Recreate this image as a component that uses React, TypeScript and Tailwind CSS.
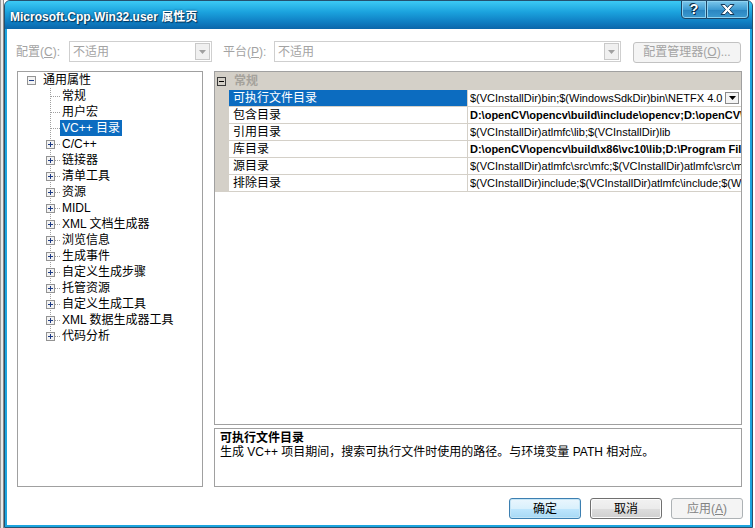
import React from 'react';

const font = "font-['Liberation_Sans','Noto_Sans_CJK_SC',sans-serif]";

const treeItems = [
  { label: '常规', expandable: false },
  { label: '用户宏', expandable: false },
  { label: 'VC++ 目录', expandable: false, selected: true },
  { label: 'C/C++', expandable: true },
  { label: '链接器', expandable: true },
  { label: '清单工具', expandable: true },
  { label: '资源', expandable: true },
  { label: 'MIDL', expandable: true },
  { label: 'XML 文档生成器', expandable: true },
  { label: '浏览信息', expandable: true },
  { label: '生成事件', expandable: true },
  { label: '自定义生成步骤', expandable: true },
  { label: '托管资源', expandable: true },
  { label: '自定义生成工具', expandable: true },
  { label: 'XML 数据生成器工具', expandable: true },
  { label: '代码分析', expandable: true },
];

const properties = [
  {
    name: '可执行文件目录',
    value: '$(VCInstallDir)bin;$(WindowsSdkDir)bin\\NETFX 4.0 Tools;$(WindowsSdkDir)bin;$(VSInstallDir)Common7\\Tools\\bin',
    bold: false,
    selected: true,
  },
  { name: '包含目录', value: 'D:\\openCV\\opencv\\build\\include\\opencv;D:\\openCV\\opencv\\build\\include;$(IncludePath)', bold: true },
  { name: '引用目录', value: '$(VCInstallDir)atlmfc\\lib;$(VCInstallDir)lib', bold: false },
  { name: '库目录', value: 'D:\\openCV\\opencv\\build\\x86\\vc10\\lib;D:\\Program Files\\Microsoft SDKs\\Windows\\v7.0A\\Lib', bold: true },
  { name: '源目录', value: '$(VCInstallDir)atlmfc\\src\\mfc;$(VCInstallDir)atlmfc\\src\\mfcm;$(VCInstallDir)atlmfc\\src\\atl', bold: false },
  { name: '排除目录', value: '$(VCInstallDir)include;$(VCInstallDir)atlmfc\\include;$(WindowsSdkDir)include;$(FrameworkSDKDir)include', bold: false },
];

function ExpandBox({ open }: { open?: boolean }) {
  return (
    <svg width="9" height="9" className="shrink-0" shapeRendering="crispEdges">
      <rect x="0.5" y="0.5" width="8" height="8" fill="#f3f3f3" stroke="#939393" />
      <line x1="2" y1="4.5" x2="7" y2="4.5" stroke="#1d3b85" />
      {!open && <line x1="4.5" y1="2" x2="4.5" y2="7" stroke="#1d3b85" />}
    </svg>
  );
}

function Connector({ expandable, last }: { expandable: boolean; last: boolean }) {
  return (
    <svg width="14" height="16" className="shrink-0" shapeRendering="crispEdges">
      <line x1="4.5" y1="0" x2="4.5" y2={last ? 8 : 16} stroke="#a0a0a0" strokeDasharray="1 1" />
      <line x1="5" y1="8.5" x2="14" y2="8.5" stroke="#a0a0a0" strokeDasharray="1 1" />
      {expandable && (
        <g>
          <rect x="0.5" y="4.5" width="8" height="8" fill="#f3f3f3" stroke="#939393" />
          <line x1="2" y1="8.5" x2="7" y2="8.5" stroke="#1d3b85" />
          <line x1="4.5" y1="6" x2="4.5" y2="11" stroke="#1d3b85" />
        </g>
      )}
    </svg>
  );
}

function Combo({ className }: { className: string }) {
  return (
    <div className={`${className} h-[21px] flex items-center border border-[#cfcfcf] bg-white`}>
      <span className="flex-1 pl-[3px] text-[#a3a3a3] leading-[16px]">不适用</span>
      <div className="w-[15px] h-[17px] mr-[1px] border border-[#c9c9c9] bg-[#f0f0f0] flex items-center justify-center">
        <svg width="7" height="4">
          <path d="M0 0h7L3.5 4z" fill="#a0a0a0" />
        </svg>
      </div>
    </div>
  );
}

function DialogButton({ children, variant }: { children: React.ReactNode; variant: 'default' | 'normal' | 'disabled' }) {
  const styles = {
    default: 'border-[#3c7fb1] bg-[linear-gradient(to_bottom,#eaf6fd,#d9f0fc_50%,#bee6fd_51%,#a7d9f5)] text-black shadow-[inset_0_0_0_1px_#c4e5f6]',
    normal: 'border-[#707070] bg-[linear-gradient(to_bottom,#f2f2f2,#ebebeb_50%,#dddddd_51%,#cfcfcf)] text-black shadow-[inset_0_0_0_1px_#fcfcfc]',
    disabled: 'border-[#adb2b5] bg-[#f4f4f4] text-[#838383]',
  };
  return (
    <div className={`w-[72px] h-[21px] rounded-[3px] border flex items-center justify-center leading-[16px] ${styles[variant]}`}>
      {children}
    </div>
  );
}

export default function App() {
  return (
    <div className={`w-[755px] h-[528px] flex overflow-hidden bg-white text-[12px] text-black ${font}`}>
      {/* strip of the window behind */}
      <div className="w-[4px] h-full bg-[#e9e9e9] border-l border-[#9a9a9a] border-r border-r-[#8a8a8a]" />

      <div className="w-[749px] h-full flex flex-col border border-[#25516f] rounded-t-[6px] overflow-hidden bg-[#1ca4de]">
        {/* title bar */}
        <div className="h-[28px] shrink-0 flex items-start bg-[linear-gradient(to_bottom,#3ccaf4,#1ba2dd_40%,#0f7ec3_75%,#0b66aa)]">
          <span className="pl-[5px] pt-[8px] leading-[16px] font-bold text-white [text-shadow:0_0_2px_#04365e,1px_1px_1px_#04365e]">
            Microsoft.Cpp.Win32.user 属性页
          </span>
          <div className="ml-auto mr-[3px] -mt-px flex h-[19px]">
            <div className="w-[26px] border border-[#1d4566] rounded-bl-[4px] bg-[linear-gradient(to_bottom,#7cc8ec,#3d9ad1_50%,#2a84c0_51%,#3b9ad0)] shadow-[inset_0_0_0_1px_#8fd2f0] flex items-center justify-center font-bold text-[14px] text-white [text-shadow:0_0_1px_#0d2f4a,1px_1px_0_#0d2f4a,-1px_-1px_0_#0d2f4a]">
              ?
            </div>
            <div className="w-[42px] border border-l-0 border-[#1d4566] rounded-br-[4px] bg-[linear-gradient(to_bottom,#7cc8ec,#3d9ad1_50%,#2a84c0_51%,#3b9ad0)] shadow-[inset_0_0_0_1px_#8fd2f0] flex items-center justify-center">
              <svg width="15" height="11" viewBox="0 0 15 11">
                <path
                  d="M1 0.5h4l2.5 3 2.5-3h4l-4.5 5 4.5 5h-4l-2.5-3-2.5 3h-4l4.5-5z"
                  fill="#ffffff"
                  stroke="#163a5a"
                  strokeWidth="1"
                  strokeLinejoin="round"
                />
              </svg>
            </div>
          </div>
        </div>

        {/* dialog body */}
        <div className="flex-1 mx-[2px] mb-[2px] bg-white flex flex-col pt-[12px] pl-[9px] pr-[7px]">
          <div className="flex items-center h-[21px]">
            <span className="w-[53px] text-[#a3a3a3] leading-[16px]">
              配置(<span className="underline">C</span>):
            </span>
            <Combo className="w-[143px]" />
            <span className="w-[51px] ml-[11px] text-[#a3a3a3] leading-[16px]">
              平台(<span className="underline">P</span>):
            </span>
            <Combo className="w-[347px]" />
            <div className="ml-[12px] mt-[1px] w-[108px] h-[21px] rounded-[3px] border border-[#c2c2c2] bg-[#f4f4f4] text-[#a3a3a3] flex items-center justify-center leading-[16px]">
              配置管理器(<span className="underline">O</span>)...
            </div>
          </div>

          <div className="flex mt-[9px] h-[416px]">
            {/* category tree */}
            <div className="ml-[1px] w-[186px] border border-[#a0a0a0] bg-white leading-[16px]">
              <div className="h-[16px] flex items-center pl-[9px]">
                <ExpandBox open />
                <span className="ml-[7px]">通用属性</span>
              </div>
              {treeItems.map((item, index) => (
                <div key={item.label} className="h-[16px] flex items-center pl-[28px]">
                  <Connector expandable={item.expandable} last={index === treeItems.length - 1} />
                  <span className={`px-[2px] h-[16px] whitespace-nowrap ${item.selected ? 'bg-[#0c6cc0] text-white' : ''}`}>
                    {item.label}
                  </span>
                </div>
              ))}
            </div>

            {/* property grid + description */}
            <div className="ml-[11px] w-[528px] flex flex-col gap-[3px]">
              <div className="flex-1 border border-[#a0a0a0] bg-white flex flex-col">
                <div className="h-[18px] bg-[#d4d0c8] flex items-center pl-[2px]">
                  <svg width="9" height="9" shapeRendering="crispEdges">
                    <rect x="0.5" y="0.5" width="8" height="8" fill="none" stroke="#3a3a3a" />
                    <line x1="2" y1="4.5" x2="7" y2="4.5" stroke="#000" />
                  </svg>
                  <span className="ml-[8px] font-bold text-[#a5a29c] leading-[16px]">常规</span>
                </div>
                {properties.map((prop) => (
                  <div key={prop.name} className="h-[17px] flex border-b border-[#d4d0c8]">
                    <div className="w-[14px] shrink-0 bg-[#d4d0c8]" />
                    <div className={`w-[238px] shrink-0 pl-[4px] leading-[16px] ${prop.selected ? 'bg-[#0c6cc0] text-white' : ''}`}>
                      {prop.name}
                    </div>
                    <div className="flex-1 min-w-0 flex items-center border-l border-[#d4d0c8] pl-[2px]">
                      <span className={`flex-1 min-w-0 overflow-hidden whitespace-nowrap text-[11px] leading-[16px] ${prop.bold ? 'font-bold' : ''}`}>
                        {prop.value}
                      </span>
                      {prop.selected && (
                        <div className="w-[14px] h-[12px] mx-[2px] shrink-0 border border-[#8a8a8a] bg-[#f4f4f4] flex items-center justify-center">
                          <svg width="7" height="4">
                            <path d="M0 0h7L3.5 4z" fill="#000" />
                          </svg>
                        </div>
                      )}
                    </div>
                  </div>
                ))}
              </div>

              <div className="h-[59px] border border-[#a0a0a0] bg-white pl-[5px] pt-[2px] leading-[14px]">
                <div className="font-bold">可执行文件目录</div>
                <div>生成 VC++ 项目期间，搜索可执行文件时使用的路径。与环境变量 PATH 相对应。</div>
              </div>
            </div>
          </div>

          <div className="mt-[11px] flex justify-end gap-[9px]">
            <DialogButton variant="default">确定</DialogButton>
            <DialogButton variant="normal">取消</DialogButton>
            <DialogButton variant="disabled">
              应用(<span className="underline">A</span>)
            </DialogButton>
          </div>
        </div>
      </div>

      <div className="flex-1 h-full bg-white" />
    </div>
  );
}
